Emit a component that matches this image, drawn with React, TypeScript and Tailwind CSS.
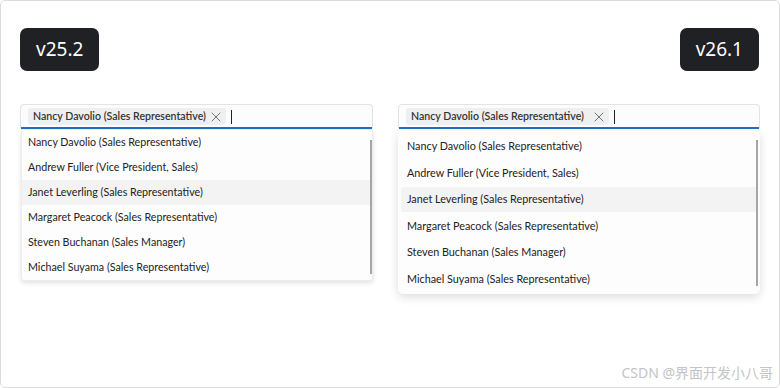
import { X } from "lucide-react";

const people = [
  "Nancy Davolio (Sales Representative)",
  "Andrew Fuller (Vice President, Sales)",
  "Janet Leverling (Sales Representative)",
  "Margaret Peacock (Sales Representative)",
  "Steven Buchanan (Sales Manager)",
  "Michael Suyama (Sales Representative)",
];

const font = { fontFamily: '"Noto Sans", "Open Sans", sans-serif' };
const listFont = { fontFamily: 'Lato, "Noto Sans", sans-serif' };

const Badge = ({ label }: { label: string }) => (
  <div className="h-[43px] px-[16px] rounded-[7px] bg-[#1f2125] text-white text-[19px] flex items-center">
    {label}
  </div>
);

const TagBox = ({ chipWidth }: { chipWidth: string }) => (
  <div className="h-[24px] border border-[#e3e3e3] border-b-0 rounded-t-[4px] bg-[#fcfcfc] flex items-center pl-[7px] relative">
    <div
      style={listFont}
      className={`h-[17px] ${chipWidth} shrink-0 rounded-[3px] bg-[#efefef] flex items-center pl-[5px] text-[10.6px] font-semibold text-[#333]`}
    >
      <span className="flex-1 whitespace-nowrap">{people[0]}</span>
      <X className="w-[16px] h-[16px] mr-[2px] shrink-0 text-[#444]" strokeWidth={1.1} />
    </div>
    <div className="w-px h-[14px] bg-[#222] ml-[5px]" />
    <div className="absolute left-0 right-0 bottom-[-1px] h-[2px] bg-[#1f6fc5]" />
  </div>
);

export default function App() {
  return (
    <div
      style={font}
      className="w-[780px] h-[388px] bg-white border border-[#dcdcdc] rounded-[5px] relative overflow-hidden"
    >
      <div className="flex pt-[27px] pl-[19px]">
        {/* old version */}
        <div className="w-[353px] flex flex-col">
          <div className="flex">
            <Badge label="v25.2" />
          </div>
          <div className="mt-[33px]">
            <TagBox chipWidth="w-[198px]" />
          </div>
          <div
            style={listFont}
            className="mt-[1px] ml-px bg-[#fdfdfd] border border-[#ececec] rounded-b-[3px] shadow-[0_2px_5px_rgba(0,0,0,0.12)] relative"
          >
            {people.map((p, i) => (
              <div
                key={i}
                className={`h-[25px] flex items-center pl-[6px] text-[10.7px] text-[#222] ${
                  i === 2 ? "bg-[#f3f3f3]" : ""
                }`}
              >
                {p}
              </div>
            ))}
            <div className="absolute right-0 top-[10px] bottom-[6px] w-[2px] bg-[#a6a6a6]" />
          </div>
        </div>

        {/* new version */}
        <div className="w-[362px] ml-[25px] flex flex-col">
          <div className="flex justify-end pr-[1px]">
            <Badge label="v26.1" />
          </div>
          <div className="mt-[33px]">
            <TagBox chipWidth="w-[203px]" />
          </div>
          <div
            style={listFont}
            className="mt-[3px] bg-[#fdfdfd] rounded-[5px] shadow-[0_3px_10px_rgba(0,0,0,0.14)] relative pt-[2px] pb-[2px] px-[3px]"
          >
            {people.map((p, i) => (
              <div key={i} className="h-[26.5px] py-[1px]">
                <div
                  className={`h-full rounded-[3px] flex items-center pl-[6px] text-[10.8px] text-[#222] ${
                    i === 2 ? "bg-[#f3f3f3]" : ""
                  }`}
                >
                  {p}
                </div>
              </div>
            ))}
            <div className="absolute right-[2px] top-[9px] bottom-[8px] w-[2px] bg-[#a6a6a6]" />
          </div>
        </div>
      </div>

      <div
        className="absolute right-[6px] bottom-[4px] text-[14px] text-[#c4c4c4]"
        style={{ fontFamily: '"Noto Sans", "Noto Sans CJK SC", sans-serif' }}
      >
        CSDN @界面开发小八哥
      </div>
    </div>
  );
}
